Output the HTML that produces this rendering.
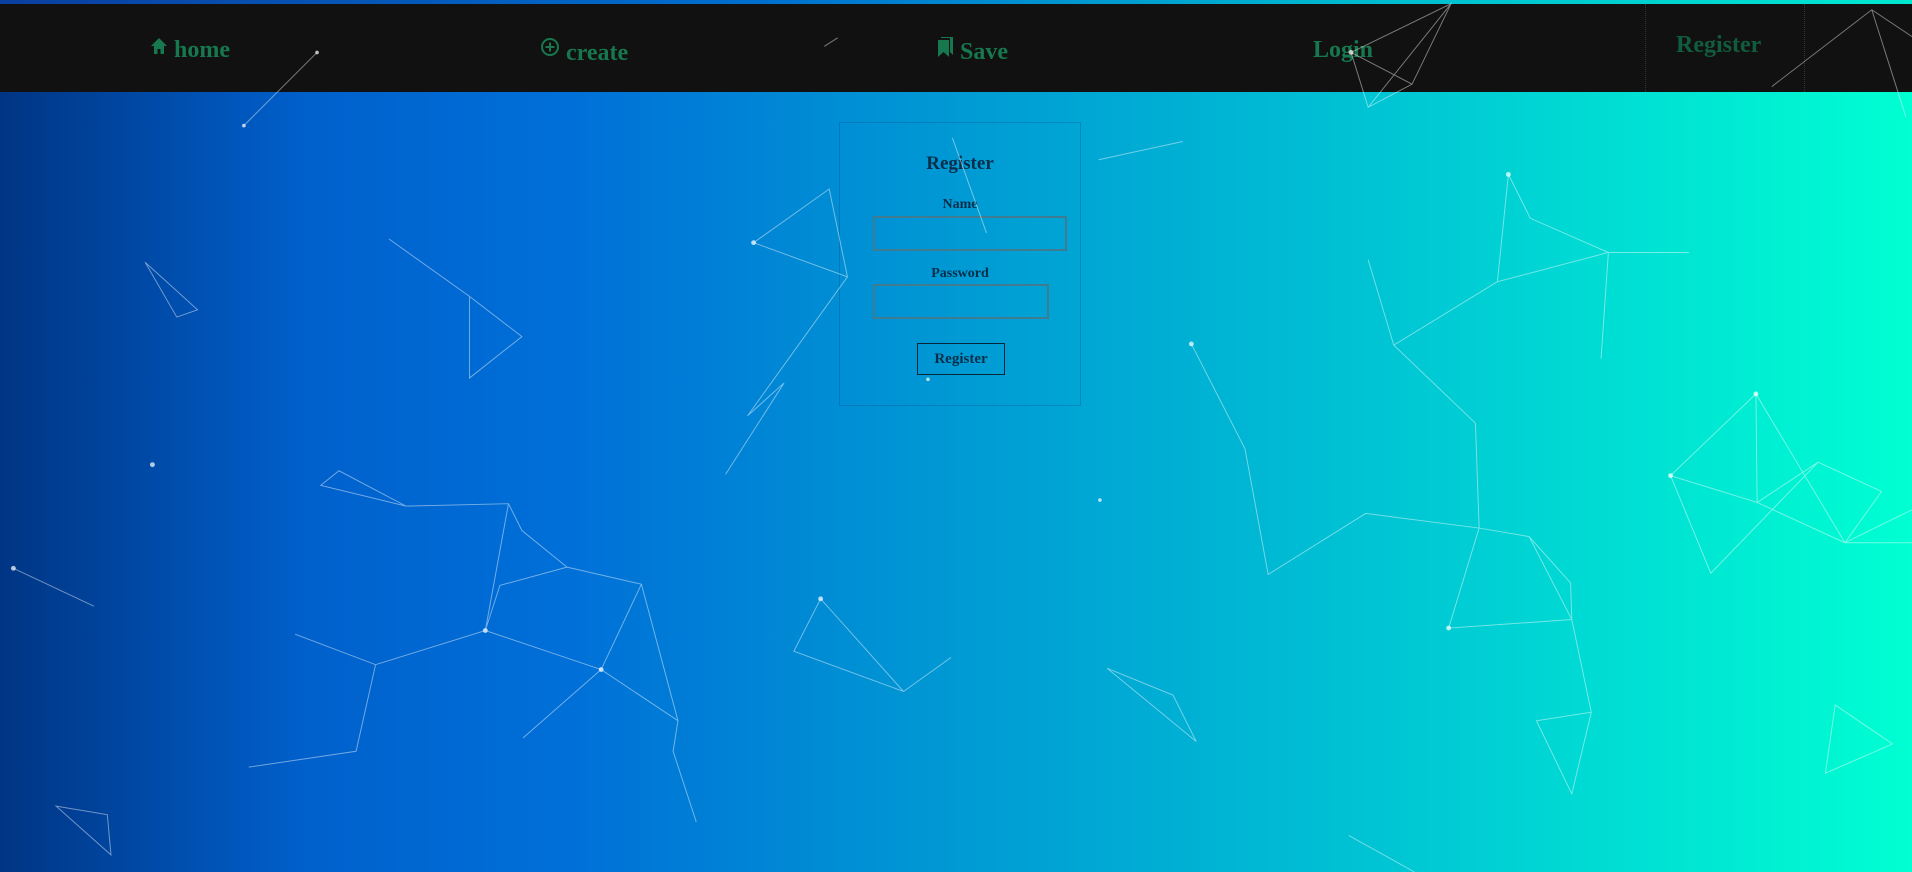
<!DOCTYPE html>
<html><head><meta charset="utf-8"><style>
html,body{margin:0;padding:0;width:1912px;height:872px;overflow:hidden}
body{background:linear-gradient(90deg,#003584 0%,#0060cc 16%,#0070d8 30%,#0090d4 45%,#00b0d4 62%,#00d4d4 80%,#00ffd2 100%);font-family:"Liberation Serif",serif;position:relative}
svg.net{position:absolute;left:0;top:0;width:1912px;height:872px;z-index:2;pointer-events:none}
nav{position:absolute;left:0;top:4px;width:1912px;height:88px;background:#111;z-index:1}
.n{position:absolute;top:33px;font-size:24px;font-weight:bold;color:#17774f;white-space:nowrap}
.reg{position:absolute;left:1645px;top:0;width:158px;height:88px;border-left:1px dotted #2a3a33;border-right:1px dotted #2a3a33}
.form{position:absolute;left:839px;top:122px;width:240px;height:282px;border:1px solid rgba(0,60,110,.25);z-index:1;color:#082f4a;font-weight:bold}
.form .t{position:absolute;width:100%;text-align:center}
.inp{position:absolute;border:2px solid #3f7c92;height:31px}
.btn{position:absolute;left:77px;top:220px;width:86px;height:30px;border:1.5px solid #06263a;text-align:center;line-height:30px;font-size:15px}
</style></head><body>
<div style="position:absolute;left:0;top:0;width:1912px;height:4px;background:linear-gradient(90deg,#0a3fa0,#0070d0 40%,#00b8d0 70%,#00e8d0)"></div>
<nav>
<div class="n" style="left:150px"><svg width="18" height="18" viewBox="0 0 18 18" style="vertical-align:2px"><path d="M9 1 L1 9 H4 V17 H7.5 V12 H10.5 V17 H14 V9 H17 Z" fill="#17774f"/></svg> home</div>
<div class="n" style="left:540px"><svg width="20" height="20" viewBox="0 0 20 20" style="vertical-align:3px"><circle cx="10" cy="10" r="8" fill="none" stroke="#17774f" stroke-width="2"/><path d="M10 5.5V14.5M5.5 10H14.5" stroke="#17774f" stroke-width="2"/></svg> create</div>
<div class="n" style="left:937px"><svg width="17" height="20" viewBox="0 0 17 20" style="vertical-align:2px"><path d="M4 0H16V18L13 15V1H4Z" fill="#17774f"/><path d="M1 3H12V20L6.5 15L1 20Z" fill="#17774f"/></svg> Save</div>
<div class="n" style="left:1313px">Login</div>
<div class="reg"></div>
<div class="n" style="left:1676px;top:28px;color:#115c3e">Register</div>
</nav>
<div class="form">
<div class="t" style="top:30px;font-size:19px">Register</div>
<div class="t" style="top:74px;font-size:14px">Name</div>
<div class="inp" style="left:33px;top:93px;width:190px"></div>
<div class="t" style="top:143px;font-size:14px">Password</div>
<div class="inp" style="left:33px;top:161px;width:172px"></div>
<div class="btn">Register</div>
</div>
<svg class="net" viewBox="0 0 1568 715" preserveAspectRatio="none">
<g stroke="rgba(255,255,255,.45)" stroke-width="0.8" fill="none">
<path d="M200 103L260 43M676 38L687 31M1108 43L1190 3L1158 69L1122 88L1108 43L1158 69M1122 88L1190 3M1453 71L1535 8L1563 96M1535 8L1568 30"/>
<path d="M119 215L162 254L145 260ZM319 196L385 243L428 276L385 310L385 243M618 199L680 155L695 227ZM695 227L613 341L643 314L595 389M809 191L781 113M901 131L970 116"/>
<path d="M263 398L278 386L333 415ZM333 415L417 413L428 435L465 465L410 480L398 517L417 413M465 465L526 479L493 549L398 517L308 545L242 520M308 545L292 616L204 629M493 549L429 605M493 549L556 591L552 616L571 674M556 591L526 479M11 466L77 497"/>
<path d="M673 491L651 534L741 567L780 539M673 491L741 567M908 548L962 570L981 608ZM977 282L1021 368L1040 471L1120 421L1213 433L1254 440L1288 478L1289 508L1188 515L1213 433M1254 440L1289 508L1305 584L1260 591L1289 651L1305 584"/>
<path d="M1237 143L1255 179L1319 207L1385 207M1237 143L1228 231L1319 207L1313 294M1122 213L1143 283L1228 231M1143 283L1210 347L1213 433"/>
<path d="M1370 390L1440 323L1441 412L1491 379L1543 403L1513 445L1441 412L1370 390L1403 470L1491 379M1440 323L1513 445M1568 418L1513 445L1568 445"/>
<path d="M1505 578L1552 610L1497 634ZM46 661L88 668L91 701ZM1106 685L1160 715"/>
</g>
<g fill="rgba(255,255,255,.7)">
<circle cx="200" cy="103" r="1.5"/><circle cx="260" cy="43" r="1.5"/><circle cx="125" cy="381" r="2"/><circle cx="902" cy="410" r="1.5"/><circle cx="761" cy="311" r="1.5"/><circle cx="977" cy="282" r="2"/><circle cx="1440" cy="323" r="2"/><circle cx="1370" cy="390" r="2"/><circle cx="1237" cy="143" r="2"/><circle cx="493" cy="549" r="2"/><circle cx="398" cy="517" r="2"/><circle cx="673" cy="491" r="2"/><circle cx="1188" cy="515" r="2"/><circle cx="11" cy="466" r="2"/><circle cx="618" cy="199" r="2"/><circle cx="1108" cy="43" r="2"/>
</g></svg>
</body></html>
